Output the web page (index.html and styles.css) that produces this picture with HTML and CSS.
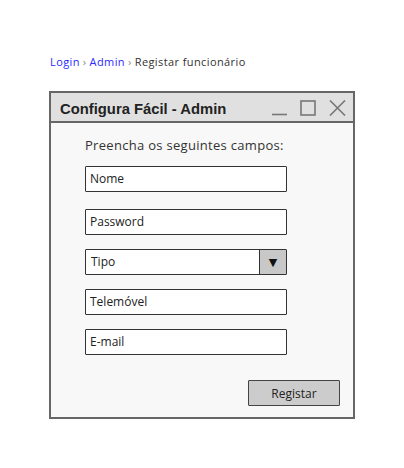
FILE: index.html
```html
<!DOCTYPE html>
<html lang="pt">
<head>
<meta charset="utf-8">
<title>Registar funcionário</title>
<link rel="stylesheet" href="styles.css">
</head>
<body>
<nav class="crumbs">
  <a class="crumb-link" href="#">Login</a><span class="sep">›</span><a class="crumb-link" href="#">Admin</a><span class="sep">›</span><span class="crumb-current">Registar funcionário</span>
</nav>
<section class="window">
  <header class="titlebar">
    <span class="title">Configura Fácil - Admin</span>
    <div class="controls">
      <svg class="ctl" width="15" height="16" viewBox="0 0 15 16"><line x1="0" y1="14.5" x2="15" y2="14.5" stroke="#777" stroke-width="1.6"/></svg>
      <svg class="ctl" width="16" height="16" viewBox="0 0 16 16"><rect x="1" y="1" width="14" height="14" fill="none" stroke="#777" stroke-width="1.6"/></svg>
      <svg class="ctl" width="17" height="16" viewBox="0 0 17 16"><path d="M1 0.5 L16 15.5 M16 0.5 L1 15.5" stroke="#777" stroke-width="1.6" fill="none"/></svg>
    </div>
  </header>
  <div class="body">
    <p class="intro">Preencha os seguintes campos:</p>
    <div class="fields">
      <div class="field">Nome</div>
      <div class="field field-gap">Password</div>
      <div class="field select"><span class="select-text">Tipo</span><span class="select-btn">▼</span></div>
      <div class="field">Telemóvel</div>
      <div class="field">E-mail</div>
    </div>
    <div class="actions">
      <button class="btn">Registar</button>
    </div>
  </div>
</section>
</body>
</html>
```
FILE: styles.css
```css
html, body {
  margin: 0;
  padding: 0;
  background: #ffffff;
}
body {
  font-family: "Open Sans", "DejaVu Sans", sans-serif;
  color: #222;
}
.crumbs {
  padding: 54px 0 0 50px;
  font-size: 11px;
  line-height: 15px;
  height: 15px;
  letter-spacing: 0.4px;
}
.crumb-link {
  color: #2a2aff;
  text-decoration: none;
}
.sep {
  color: #888;
  margin: 0 3px;
}
.crumb-current {
  color: #333;
}
.window {
  box-sizing: border-box;
  width: 306px;
  margin: 22px 0 0 49px;
  border: 2px solid #666;
  background: #f8f8f8;
}
.titlebar {
  display: flex;
  align-items: center;
  justify-content: space-between;
  height: 28px;
  background: #e0e0e0;
  border-bottom: 2px solid #666;
  padding: 0 7px 0 9px;
}
.title {
  font-family: "Liberation Sans", Arial, sans-serif;
  font-weight: bold;
  font-size: 14.8px;
  color: #222;
  padding-top: 3px;
}
.controls {
  display: flex;
  align-items: center;
  gap: 13px;
  padding-top: 2px;
}
.ctl {
  display: block;
}
.body {
  padding: 13px 0 11px 34px;
}
.intro {
  margin: 0;
  font-size: 13px;
  line-height: 18px;
  letter-spacing: 0.3px;
  color: #333;
}
.fields {
  display: flex;
  flex-direction: column;
  gap: 14px;
  margin-top: 12px;
  width: 202px;
}
.field {
  box-sizing: border-box;
  height: 26px;
  border: 1.5px solid #333;
  background: #fff;
  font-size: 12px;
  line-height: 23px;
  padding-left: 4px;
  color: #222;
  border-radius: 1px;
}
.field-gap {
  margin-top: 3px;
}
.select {
  display: flex;
  padding-left: 0;
}
.select-text {
  flex: 1;
  padding-left: 5px;
}
.select-btn {
  width: 26px;
  background: #c8c8c8;
  border-left: 1.5px solid #333;
  font-size: 11px;
  text-align: center;
  color: #111;
}
.actions {
  display: flex;
  justify-content: flex-end;
  padding-right: 13px;
  margin-top: 25px;
}
.btn {
  width: 92px;
  height: 26px;
  background: #cccccc;
  border: 1.5px solid #444;
  border-radius: 1px;
  font-family: "Open Sans", "DejaVu Sans", sans-serif;
  font-size: 12px;
  color: #222;
  padding: 0;
}
```
